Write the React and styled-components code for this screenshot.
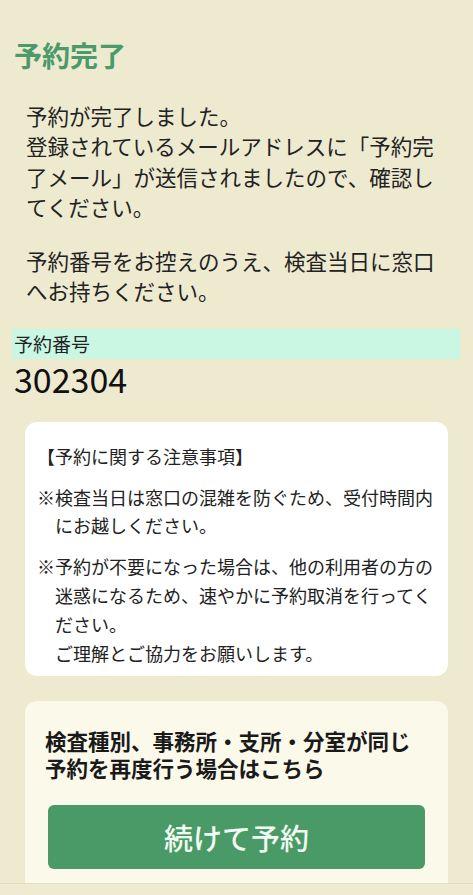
import React from "react"
import styled, { createGlobalStyle } from "styled-components"

const GlobalStyle = createGlobalStyle`
  html, body {
    margin: 0;
    padding: 0;
    background: #eeead0;
  }
  body {
    font-family: "Noto Sans CJK JP", "Noto Sans", sans-serif;
    color: #222;
  }
`

const Page = styled.div`
  display: flex;
  flex-direction: column;
  padding-top: 36px;
  min-height: 895px;
  box-sizing: border-box;
`

const Title = styled.h1`
  margin: 0 0 27px 14px;
  font-size: 28px;
  line-height: 38px;
  font-weight: 700;
  color: #4a9a6b;
`

const Message = styled.p`
  margin: 0 26px 24px 26px;
  font-size: 21.5px;
  line-height: 30.3px;
  &:last-of-type {
    margin-bottom: 22px;
  }
`

const NumberLabel = styled.div`
  margin: 0 13px 0 12px;
  padding-left: 2px;
  height: 30px;
  line-height: 30px;
  font-size: 19px;
  background: #c9f7e4;
`

const NumberValue = styled.div`
  margin: 0 0 23px 14px;
  font-size: 34px;
  line-height: 40px;
  color: #111;
`

const NoticeCard = styled.section`
  margin: 0 25px;
  padding: 20px 10px 9px 12px;
  background: #fff;
  border-radius: 12px;
  font-size: 18px;
  line-height: 28.8px;
`

const NoticeHeading = styled.div`
  margin-bottom: 12px;
`

const NoticeItem = styled.p`
  margin: 0 0 12px 0;
  padding-left: 1em;
  text-indent: -1em;
  &:last-child {
    margin-bottom: 0;
  }
`

const RepeatCard = styled.section`
  margin: 25px 25px 0 25px;
  padding: 26px 20px 14px 20px;
  background: #fbf9ea;
  border-radius: 12px 12px 0 0;
`

const RepeatText = styled.p`
  margin: 0 0 24px 0;
  font-size: 21.5px;
  line-height: 27px;
  font-weight: 700;
  color: #1a1a1a;
`

const ContinueButton = styled.button`
  display: block;
  width: calc(100% - 6px);
  margin: 0 3px;
  height: 64px;
  border: none;
  border-radius: 6px;
  background: #4a9a68;
  color: #f2faf1;
  font-family: inherit;
  font-size: 29px;
  font-weight: 500;
  cursor: pointer;
`

const Footer = styled.div`
  flex: 1;
  border-top: 1px solid #e2dec3;
  background: #efebd3;
`

export default function App() {
  return (
    <>
      <GlobalStyle />
      <Page>
        <Title>予約完了</Title>
        <Message>
          予約が完了しました。
          <br />
          登録されているメールアドレスに「予約完了メール」が送信されましたので、確認してください。
        </Message>
        <Message>予約番号をお控えのうえ、検査当日に窓口へお持ちください。</Message>
        <NumberLabel>予約番号</NumberLabel>
        <NumberValue>302304</NumberValue>
        <NoticeCard>
          <NoticeHeading>【予約に関する注意事項】</NoticeHeading>
          <NoticeItem>※検査当日は窓口の混雑を防ぐため、受付時間内にお越しください。</NoticeItem>
          <NoticeItem>
            ※予約が不要になった場合は、他の利用者の方の迷惑になるため、速やかに予約取消を行ってください。
            <br />
            ご理解とご協力をお願いします。
          </NoticeItem>
        </NoticeCard>
        <RepeatCard>
          <RepeatText>検査種別、事務所・支所・分室が同じ予約を再度行う場合はこちら</RepeatText>
          <ContinueButton type="button">続けて予約</ContinueButton>
        </RepeatCard>
        <Footer />
      </Page>
    </>
  )
}
